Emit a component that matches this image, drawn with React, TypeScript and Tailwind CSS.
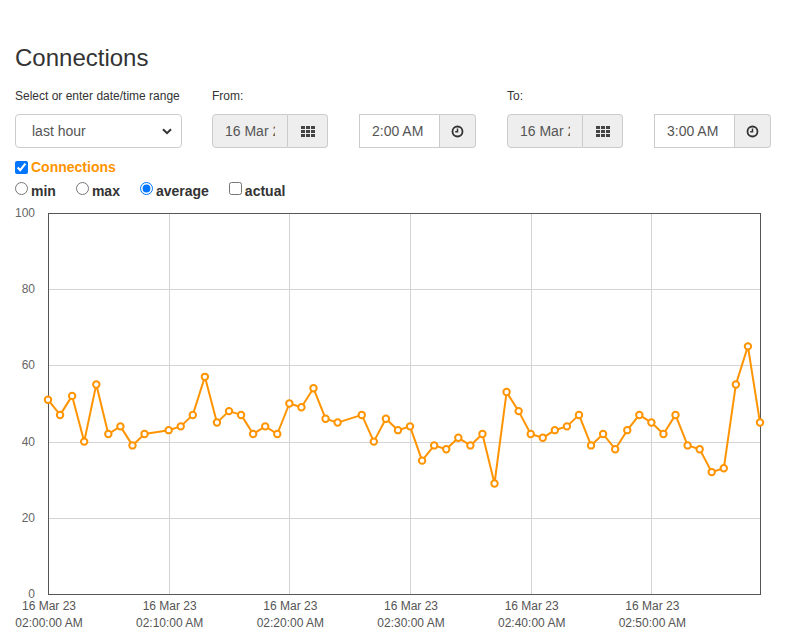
import React from "react";

const ORANGE = "#ff9400";

const data: (number | null)[] = [
  51, 47, 52, 40, 55, 42, 44, 39, 42, null,
  43, 44, 47, 57, 45, 48, 47, 42, 44, 42,
  50, 49, 54, 46, 45, null, 47, 40, 46, 43,
  44, 35, 39, 38, 41, 39, 42, 29, 53, 48,
  42, 41, 43, 44, 47, 39, 42, 38, 43, 47,
  45, 42, 47, 39, 38, 32, 33, 55, 65, 45,
];

const X0 = 48;
const X1 = 760;
const TOP = 9;
const BOT = 390;
const sx = (i: number) => X0 + (i * (X1 - X0)) / 59;
const sy = (v: number) => BOT - (v * (BOT - TOP)) / 100;

function GridIcon() {
  const rects = [];
  for (let r = 0; r < 3; r++)
    for (let c = 0; c < 3; c++)
      rects.push(<rect key={`${r}-${c}`} x={c * 5} y={r * 4} width={4} height={3} fill="#444" />);
  return (
    <svg width="14" height="11" viewBox="0 0 14 11">
      {rects}
    </svg>
  );
}

function ClockIcon() {
  return (
    <svg width="13" height="13" viewBox="0 0 13 13">
      <circle cx="6.5" cy="6.5" r="5" fill="none" stroke="#333" strokeWidth="1.8" />
      <path d="M6.5 3.6 V6.8 H4.2" fill="none" stroke="#333" strokeWidth="1.5" />
    </svg>
  );
}

function DateGroup({ value }: { value: string }) {
  return (
    <div className="flex h-[34px] w-[116px]">
      <div className="w-[76px] h-full bg-[#eeeeee] border border-[#cccccc] rounded-l-[4px] px-[12px] flex items-center text-[14px] text-[#555555]">
        <div className="flex-1 overflow-hidden whitespace-nowrap">{value}</div>
      </div>
      <div className="w-[40px] h-full bg-[#eeeeee] border border-l-0 border-[#cccccc] rounded-r-[4px] flex items-center justify-center">
        <GridIcon />
      </div>
    </div>
  );
}

function TimeGroup({ value }: { value: string }) {
  return (
    <div className="flex h-[34px] w-[117px]">
      <div className="w-[81px] h-full bg-white border border-[#cccccc] px-[12px] flex items-center whitespace-nowrap text-[14px] text-[#555555]">
        {value}
      </div>
      <div className="w-[36px] h-full bg-[#eeeeee] border border-l-0 border-[#cccccc] rounded-r-[4px] flex items-center justify-center">
        <ClockIcon />
      </div>
    </div>
  );
}

function Chart() {
  const pts = data
    .map((v, i) => (v === null ? null : { x: sx(i), y: sy(v) }))
    .filter((p): p is { x: number; y: number } => p !== null);
  const path = pts.map((p, i) => `${i === 0 ? "M" : "L"}${p.x.toFixed(1)} ${p.y.toFixed(1)}`).join(" ");
  const yTicks = [0, 20, 40, 60, 80, 100];
  const xTicks = [0, 10, 20, 30, 40, 50];
  const times = ["02:00:00 AM", "02:10:00 AM", "02:20:00 AM", "02:30:00 AM", "02:40:00 AM", "02:50:00 AM"];
  return (
    <svg width="787" height="430" viewBox="0 0 787 430" className="block" style={{ fontFamily: '"Liberation Sans", Arial, sans-serif' }}>
      {yTicks.slice(1, 5).map((t) => (
        <line key={`h${t}`} x1={X0} x2={X1} y1={Math.round(sy(t)) + 0.5} y2={Math.round(sy(t)) + 0.5} stroke="#d4d4d4" strokeWidth="1" />
      ))}
      {xTicks.slice(1).map((t) => (
        <line key={`v${t}`} x1={Math.round(sx(t)) + 0.5} x2={Math.round(sx(t)) + 0.5} y1={TOP} y2={BOT} stroke="#d4d4d4" strokeWidth="1" />
      ))}
      <rect x={X0 + 0.5} y={TOP + 0.5} width={X1 - X0} height={BOT - TOP} fill="none" stroke="#555555" strokeWidth="1" />
      {yTicks.map((t) => (
        <text key={`yl${t}`} x="35" y={sy(t) + 4} textAnchor="end" fontSize="12" fill="#666666">
          {t}
        </text>
      ))}
      {xTicks.map((t, k) => (
        <g key={`xl${t}`}>
          <text x={sx(t) + 1} y={406} textAnchor="middle" fontSize="12" fill="#555555">
            16 Mar 23
          </text>
          <text x={sx(t) + 1} y={423} textAnchor="middle" fontSize="12" fill="#555555">
            {times[k]}
          </text>
        </g>
      ))}
      <path d={path} fill="none" stroke={ORANGE} strokeWidth="2" strokeLinejoin="round" />
      {pts.map((p, i) => (
        <circle key={i} cx={p.x} cy={p.y} r="3.2" fill="white" stroke={ORANGE} strokeWidth="2" />
      ))}
    </svg>
  );
}

export default function App() {
  return (
    <div className="w-[787px] h-[634px] overflow-hidden bg-white text-[#333333]" style={{ fontFamily: '"Liberation Sans", Arial, sans-serif' }}>
      <div className="pt-[45px] px-[15px]">
        <h3 className="text-[24px] leading-[26px] font-normal">Connections</h3>
        <div className="mt-[17px] flex">
          <div className="w-[167px]">
            <div className="text-[12px] leading-[17px]">Select or enter date/time range</div>
            <div className="mt-[9px] relative h-[34px] w-[167px] border border-[#cccccc] rounded-[4px] bg-white flex items-center pl-[16px] text-[14px] text-[#555555]">
              last hour
              <svg className="absolute right-[9px] top-[13px]" width="10" height="7" viewBox="0 0 10 7">
                <path d="M1 1.2 L5 5.2 L9 1.2" fill="none" stroke="#333" strokeWidth="2" />
              </svg>
            </div>
          </div>
          <div className="ml-[30px] w-[264px]">
            <div className="text-[12px] leading-[17px]">From:</div>
            <div className="mt-[9px] flex gap-[31px]">
              <DateGroup value="16 Mar 2023" />
              <TimeGroup value="2:00 AM" />
            </div>
          </div>
          <div className="ml-[31px] w-[264px]">
            <div className="text-[12px] leading-[17px]">To:</div>
            <div className="mt-[9px] flex gap-[31px]">
              <DateGroup value="16 Mar 2023" />
              <TimeGroup value="3:00 AM" />
            </div>
          </div>
        </div>
        <div className="mt-[9px] h-[20px] flex items-center">
          <input type="checkbox" defaultChecked className="w-[13px] h-[13px]" />
          <span className="ml-[3px] text-[14px] leading-[20px] font-bold text-[#ff9400]">Connections</span>
        </div>
        <div className="mt-[4px] h-[20px] flex items-center gap-[20px] text-[14px] leading-[20px] font-bold">
          <label className="flex items-center">
            <input type="radio" name="agg" className="w-[13px] h-[13px] mb-[5px]" />
            <span className="ml-[3px]">min</span>
          </label>
          <label className="flex items-center">
            <input type="radio" name="agg" className="w-[13px] h-[13px] mb-[5px]" />
            <span className="ml-[3px]">max</span>
          </label>
          <label className="flex items-center">
            <input type="radio" name="agg" defaultChecked className="w-[13px] h-[13px] mb-[5px]" />
            <span className="ml-[3px]">average</span>
          </label>
          <label className="flex items-center">
            <input type="checkbox" className="w-[13px] h-[13px] mb-[5px]" />
            <span className="ml-[3px]">actual</span>
          </label>
        </div>
      </div>
      <div className="mt-[3px]">
        <Chart />
      </div>
    </div>
  );
}
